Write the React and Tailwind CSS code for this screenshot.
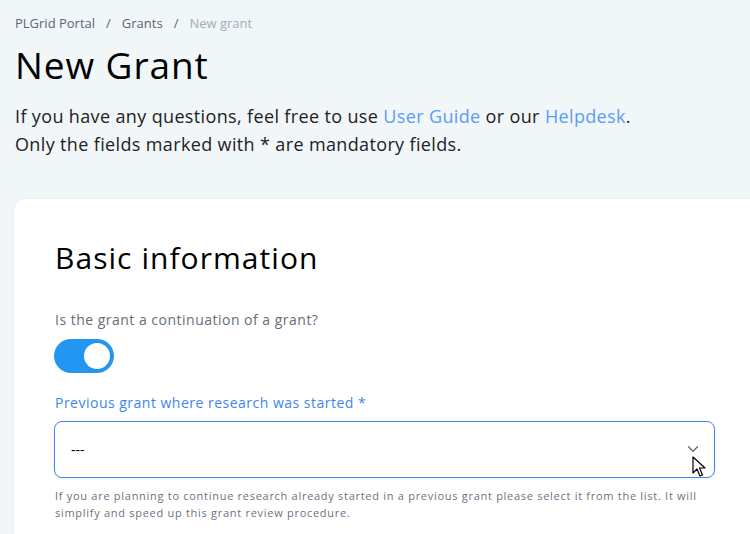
import React from "react";
import { ChevronDown } from "lucide-react";

export default function App() {
  return (
    <div
      className="min-h-screen w-[750px] h-[534px] overflow-hidden bg-[#f1f6f9]"
      style={{ fontFamily: '"Open Sans", "Noto Sans", sans-serif' }}
    >
      <div className="pl-[15px] pt-[14px]">
        <nav className="flex items-center text-[13px] leading-[18px] text-[#5b6573]">
          <span>PLGrid Portal</span>
          <span className="px-[11px]">/</span>
          <span>Grants</span>
          <span className="px-[11px]">/</span>
          <span className="text-[#a3adb8]">New grant</span>
        </nav>
        <h1 className="mt-[11px] text-[37px] leading-[44px] tracking-[0.025em] text-black">New Grant</h1>
        <p className="mt-[15px] text-[18px] leading-[28px] tracking-[0.02em] text-[#222]">
          If you have any questions, feel free to use{" "}
          <a className="text-[#5b9cf5]">User Guide</a> or our{" "}
          <a className="text-[#5b9cf5]">Helpdesk</a>.
          <br />
          Only the fields marked with * are mandatory fields.
        </p>
      </div>

      <div className="ml-[14px] mt-[41px] w-[800px] rounded-[12px] bg-white pl-[41px] pt-[39px] pb-10 shadow-[0_0_3px_rgba(0,0,0,0.06)]">
        <h2 className="text-[30px] leading-[40px] tracking-[0.035em] text-black">Basic information</h2>

        <div className="mt-[32px] text-[14px] leading-[20px] tracking-[0.035em] text-[#646e7b]">
          Is the grant a continuation of a grant?
        </div>
        <div className="-ml-px mt-[9px] flex h-[34px] w-[60px] items-center justify-end rounded-full bg-[#2196f3] pr-[4px]">
          <div className="h-[26px] w-[26px] rounded-full bg-white" />
        </div>

        <div className="mt-[20px] text-[14px] leading-[20px] tracking-[0.035em] text-[#3d86f0]">
          Previous grant where research was started *
        </div>
        <div className="relative -ml-px mt-[8px] flex h-[57px] w-[661px] items-center justify-between rounded-[8px] border border-[#3f86f5] bg-white pl-[16px] pr-[12px] shadow-[0_1px_3px_rgba(0,0,0,0.08)]">
          <span className="text-[14px] text-black">---</span>
          <ChevronDown size={18} strokeWidth={1.75} className="-mt-[2px] text-[#5f6875]" />
          <svg
            className="absolute left-[637px] top-[34px]"
            width="14"
            height="22"
            viewBox="0 0 14 22"
          >
            <path
              d="M1 1 L1 17 L5 13 L8 20 L10.5 19 L7.5 12 L13 12 Z"
              fill="white"
              stroke="black"
              strokeWidth="1.2"
              strokeLinejoin="round"
            />
          </svg>
        </div>
        <p className="mt-[9px] w-[660px] text-[11px] leading-[17px] tracking-[0.065em] text-[#6b7280]">
          If you are planning to continue research already started in a previous grant please select it from the list. It will simplify and speed up this grant review procedure.
        </p>
      </div>
    </div>
  );
}
